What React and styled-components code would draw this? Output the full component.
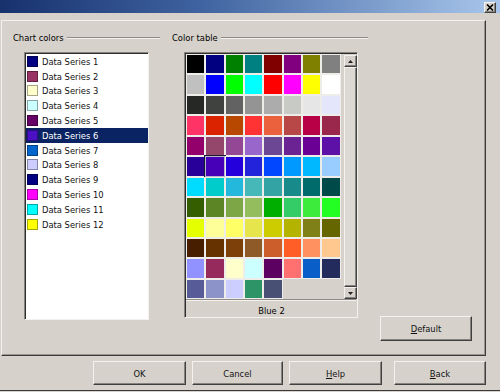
import React from 'react';
import styled, { createGlobalStyle } from 'styled-components';

const GlobalStyle = createGlobalStyle`
  html, body {
    margin: 0;
    padding: 0;
  }
  body {
    font-family: "DejaVu Sans Condensed", "DejaVu Sans", sans-serif;
    font-size: 9.3px;
    color: #000;
    background: #d6d2cb;
  }
`;

const series = [
    ['#000080', 'Data Series 1'],
    ['#993366', 'Data Series 2'],
    ['#ffffcc', 'Data Series 3'],
    ['#ccffff', 'Data Series 4'],
    ['#660066', 'Data Series 5'],
    ['#4a10c4', 'Data Series 6'],
    ['#0066cc', 'Data Series 7'],
    ['#ccccff', 'Data Series 8'],
    ['#000080', 'Data Series 9'],
    ['#ff00ff', 'Data Series 10'],
    ['#00ffff', 'Data Series 11'],
    ['#ffff00', 'Data Series 12'],
];

const palette = [
    '#000000', '#000080', '#008000', '#008080', '#800000', '#800080', '#808000', '#808080',
    '#c0c0c0', '#0000ff', '#00ff00', '#00ffff', '#ff0000', '#ff00ff', '#ffff00', '#ffffff',
    '#262826', '#404240', '#626262', '#949494', '#acacac', '#c8cac6', '#e6e6e6', '#e4e6fc',
    '#ff3366', '#dc2300', '#b84700', '#ff3333', '#eb613d', '#b84747', '#b80047', '#99284c',
    '#94006b', '#94476b', '#944794', '#9966cc', '#6b4794', '#6b2394', '#6b0094', '#5e11a6',
    '#280099', '#4700b8', '#2300dc', '#2323dc', '#0047ff', '#0099ff', '#00b8ff', '#99ccff',
    '#00dcff', '#00cccc', '#23b8dc', '#47b8b8', '#33a3a3', '#198a8a', '#006b6b', '#004a4a',
    '#355e00', '#5c8526', '#7da647', '#94bd5e', '#00ae00', '#33cc66', '#3deb3d', '#23ff23',
    '#e6ff00', '#ffff99', '#ffff66', '#e6e64c', '#cccc00', '#b3b300', '#808019', '#666600',
    '#471e00', '#663300', '#7c4008', '#8e5a28', '#cc5e2c', '#ff5e26', '#ff9060', '#ffc88e',
    '#9191ff', '#962a5c', '#ffffcc', '#ccffff', '#5c0062', '#ff7070', '#0a5ec8', '#232a5c',
    '#575c98', '#8b93c9', '#ccceff', '#2d9467', '#485173',
];

const SELECTED_SERIES = 5;
const SELECTED_COLOR = 41;

const App = () => {
    return (
        <Window>
            <GlobalStyle />
            <TitleBar>
                <CloseBtn>
                    <svg width="8" height="7" viewBox="0 0 8 7">
                        <path d="M1 0.5 L7 6.5 M7 0.5 L1 6.5" stroke="#000" strokeWidth="1.6" />
                    </svg>
                </CloseBtn>
            </TitleBar>
            <TabPage>
                <Layout>
                    <GroupHead>Chart colors<Rule /></GroupHead>
                    <GroupHead>Color table<Rule /></GroupHead>
                    <span />
                    <ListBox>
                        {series.map(([c, name], i) => (
                            <ListRow key={name} $selected={i === SELECTED_SERIES}>
                                <Chip style={{ background: c }} />
                                {name}
                            </ListRow>
                        ))}
                    </ListBox>
                    <ColorBox>
                        <TableArea>
                            <SwatchGrid>
                                {palette.map((c, i) => (
                                    <Cell key={i}>
                                        <Swatch style={{ background: c }} $selected={i === SELECTED_COLOR} />
                                    </Cell>
                                ))}
                            </SwatchGrid>
                            <ScrollBar>
                                <ScrollBtn>
                                    <svg width="5" height="3" viewBox="0 0 5 3"><path d="M2.5 0 L5 3 L0 3 Z" fill="#222" /></svg>
                                </ScrollBtn>
                                <Thumb />
                                <ScrollBtn>
                                    <svg width="5" height="3" viewBox="0 0 5 3"><path d="M0 0 L5 0 L2.5 3 Z" fill="#222" /></svg>
                                </ScrollBtn>
                            </ScrollBar>
                        </TableArea>
                        <Separator />
                        <ColorName>Blue 2</ColorName>
                    </ColorBox>
                    <DefaultBtn><Key>D</Key>efault</DefaultBtn>
                </Layout>
            </TabPage>
            <Footer>
                <Button $w={93}>OK</Button>
                <Button $w={91}>Cancel</Button>
                <Button $w={93}><Key>H</Key>elp</Button>
                <BackBtn $w={92}><Key>B</Key>ack</BackBtn>
            </Footer>
        </Window>
    );
};

const bevel = `
    border: 1px solid;
    border-color: #f4f2ee #404040 #404040 #f4f2ee;
    box-shadow: inset -1px -1px #86837e;
`;

const Window = styled.div`
    width: 500px;
    height: 392px;
    overflow: hidden;
    background: #d6d2cb;
    display: flex;
    flex-direction: column;
`;

const TitleBar = styled.div`
    flex: none;
    height: 13px;
    background: linear-gradient(to right, #17316d 0%, #3f63a0 40%, #a9c7ec 100%);
    display: flex;
    justify-content: flex-end;
    align-items: flex-end;
    padding-right: 4px;
`;

const CloseBtn = styled.div`
    width: 12px;
    height: 11px;
    box-sizing: border-box;
    background: #d6d2cb;
    ${bevel}
    display: flex;
    align-items: center;
    justify-content: center;
`;

const TabPage = styled.div`
    flex: none;
    margin: 7px 0 0 1px;
    width: 485px;
    height: 336px;
    box-sizing: border-box;
    border: 1px solid;
    border-color: #f4f2ee #3a3a3a #3a3a3a #f4f2ee;
    box-shadow: inset -1px -1px #9a9791;
`;

const Layout = styled.div`
    height: 100%;
    box-sizing: border-box;
    padding: 11px 0 14px 11px;
    display: grid;
    grid-template-columns: 147px 196px 92px;
    grid-template-rows: 12px 1fr;
    column-gap: 12px;
    row-gap: 8px;
`;

const GroupHead = styled.div`
    display: flex;
    align-items: center;
    gap: 3px;
    line-height: 12px;
    white-space: nowrap;
`;

const Rule = styled.div`
    flex: 1;
    height: 0;
    margin-top: -1px;
    border-top: 1px solid #8e8b86;
    border-bottom: 1px solid #f4f2ee;
`;

const sunken = `
    box-sizing: border-box;
    border: 1px solid;
    border-color: #86837e #f4f2ee #f4f2ee #86837e;
    box-shadow: inset 1px 1px #2e2e2e;
`;

const ListBox = styled.div`
    align-self: start;
    margin-left: 11px;
    width: 125px;
    height: 268px;
    background: #fff;
    ${sunken}
    padding: 1px 0 0 1px;
`;

const ListRow = styled.div`
    height: 14.8px;
    display: flex;
    align-items: center;
    gap: 4px;
    padding-left: 1px;
    white-space: nowrap;
    background: ${p => (p.$selected ? '#0a2463' : 'transparent')};
    color: ${p => (p.$selected ? '#fff' : '#111')};
`;

const Chip = styled.span`
    flex: none;
    width: 11px;
    height: 11px;
    box-shadow: inset 0 0 0 1px rgba(0, 0, 0, 0.35);
`;

const ColorBox = styled.div`
    align-self: start;
    margin-left: 12px;
    width: 174px;
    height: 266px;
    ${sunken}
    padding: 1px 0 0 1px;
    display: flex;
    flex-direction: column;
`;

const TableArea = styled.div`
    flex: none;
    height: 245.4px;
    display: flex;
`;

const SwatchGrid = styled.div`
    display: grid;
    grid-template-columns: repeat(8, 19.33px);
    grid-template-rows: repeat(12, 20.45px);
`;

const Cell = styled.div`
    padding: 1px;
    display: flex;
`;

const Swatch = styled.div`
    flex: 1;
    box-shadow: ${p => (p.$selected
        ? '0 0 0 1px #b8b6c8, 0 0 0 2px #181830'
        : '0 0 0 1px #efede9')};
`;

const ScrollBar = styled.div`
    margin-left: auto;
    width: 13px;
    padding-top: 1px;
    display: flex;
    flex-direction: column;
`;

const ScrollBtn = styled.div`
    flex: none;
    height: 12px;
    box-sizing: border-box;
    ${bevel}
    display: flex;
    align-items: center;
    justify-content: center;
`;

const Thumb = styled.div`
    flex: 1;
    box-sizing: border-box;
    ${bevel}
    background: #dcd9d3;
`;

const Separator = styled.div`
    flex: none;
    margin-right: 1px;
    border-top: 1px solid #8e8b86;
    border-bottom: 1px solid #f4f2ee;
`;

const ColorName = styled.div`
    flex: 1;
    display: flex;
    align-items: center;
    justify-content: center;
    padding-top: 2px;
`;

const Button = styled.button`
    flex: none;
    width: ${p => p.$w || 92}px;
    height: 24px;
    margin: 0;
    padding: 0;
    font: inherit;
    color: #111;
    background: #d6d2cb;
    ${bevel}
`;

const DefaultBtn = styled(Button)`
    align-self: end;
    height: 25px;
`;

const BackBtn = styled(Button)`
    margin-left: 6px;
`;

const Key = styled.span`
    text-decoration: underline;
    text-underline-offset: 1px;
`;

const Footer = styled.div`
    flex: 1;
    margin: 1px 0 1px;
    padding: 4px 0 0 93px;
    display: flex;
    align-items: flex-start;
    gap: 6px;
    border-bottom: 1px solid #3a3a3a;
`;

export default App;
